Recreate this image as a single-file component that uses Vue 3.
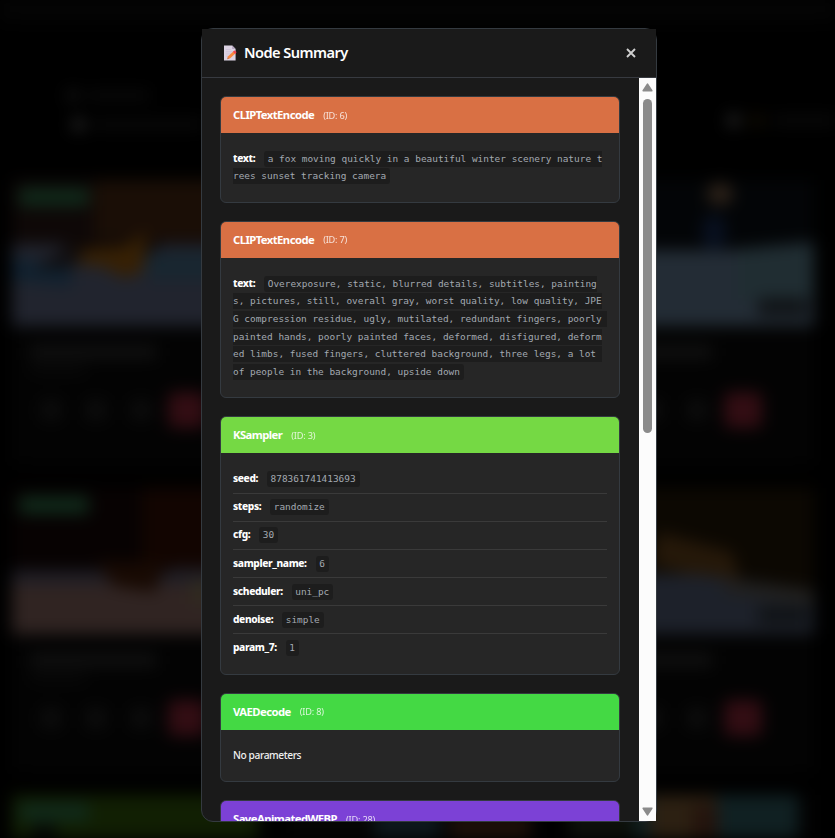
<script setup>
const cards = [
  { scene: 'river', badge: true }, { scene: 'river' }, { scene: 'lake', tag: true },
  { scene: 'dusk', badge: true }, { scene: 'dusk' }, { scene: 'ridge', tag: true },
  { scene: 'grass', badge: true }, { scene: 'embers' }, { scene: 'reef' },
]

const nodes = [
  {
    type: 'CLIPTextEncode', id: 6, tone: 'orange',
    params: [['text', 'a fox moving quickly in a beautiful winter scenery nature trees sunset tracking camera']],
  },
  {
    type: 'CLIPTextEncode', id: 7, tone: 'orange',
    params: [['text', 'Overexposure, static, blurred details, subtitles, paintings, pictures, still, overall gray, worst quality, low quality, JPEG compression residue, ugly, mutilated, redundant fingers, poorly painted hands, poorly painted faces, deformed, disfigured, deformed limbs, fused fingers, cluttered background, three legs, a lot of people in the background, upside down']],
  },
  {
    type: 'KSampler', id: 3, tone: 'lime',
    params: [
      ['seed', '878361741413693'], ['steps', 'randomize'], ['cfg', '30'],
      ['sampler_name', '6'], ['scheduler', 'uni_pc'], ['denoise', 'simple'], ['param_7', '1'],
    ],
  },
  { type: 'VAEDecode', id: 8, tone: 'green', params: [] },
  { type: 'SaveAnimatedWEBP', id: 28, tone: 'violet', params: [] },
]
</script>

<template>
  <div class="page">
    <div class="backdrop">
      <div class="toolbar">
        <div class="tool-col">
          <div class="tool-line"><i class="dot"></i><i class="bar"></i></div>
          <div class="tool-line second"><i class="dot bright"></i><i class="bar long"></i></div>
        </div>
        <div class="tool-right"><i class="dot bright"></i><i class="bar amber"></i><i class="bar"></i></div>
      </div>
      <div class="gallery">
        <div v-for="(c, i) in cards" :key="i" class="tile">
          <div class="thumb" :class="c.scene">
            <svg viewBox="0 0 246 146" preserveAspectRatio="none">
              <g v-if="c.scene === 'river'">
                <rect width="246" height="146" fill="#0e0807" />
                <path d="M82 0h164v60H82z" fill="#1a0e06" />
                <path d="M0 64h50l20 16h60l20-16h96v82H0z" fill="#21242e" />
                <path d="M0 78l60 8v20l-60-6z" fill="#10212f" />
                <path d="M136 72h110v28H136z" fill="#182630" />
                <path d="M62 70l50-4 24-14-6 40-18 6-22-12-26-2z" fill="#362004" />
                <path d="M22 88l34-22 16 8-12 14z" fill="#100e10" />
              </g>
              <g v-else-if="c.scene === 'lake'">
                <rect width="246" height="146" fill="#030507" />
                <path d="M0 70h160l86-8v84H0z" fill="#232c35" />
                <path d="M170 70l76-6v56h-76z" fill="#202d32" />
                <ellipse cx="152" cy="14" rx="13" ry="11" fill="#2d2219" />
                <ellipse cx="146" cy="52" rx="12" ry="18" fill="#081020" />
              </g>
              <g v-else-if="c.scene === 'dusk'">
                <rect width="246" height="146" fill="#070202" />
                <path d="M130 0h116v82H130z" fill="#120501" />
                <path d="M0 82h86l20 10h34l20-12h86v66H0z" fill="#1f1e25" />
                <path d="M0 96h246v50H0z" fill="#302422" />
                <path d="M84 74h66l-6 30-42-6z" fill="#180a03" />
                <path d="M178 92h60v24h-60z" fill="#302a20" />
              </g>
              <g v-else-if="c.scene === 'ridge'">
                <rect width="246" height="146" fill="#0c0802" />
                <path d="M90 44l74 20 10 36-90-24z" fill="#251809" />
                <path d="M0 86h130l116 16v44H0z" fill="#1d212a" />
                <path d="M156 94l90 10v12l-90-12z" fill="#22201c" />
              </g>
              <g v-else-if="c.scene === 'grass'">
                <rect width="246" height="146" fill="#111f03" />
                <ellipse cx="32" cy="36" rx="14" ry="7" fill="#050807" />
                <path d="M20 44h226v102H20z" fill="#210d05" />
              </g>
              <g v-else-if="c.scene === 'embers'">
                <rect width="246" height="146" fill="#050504" />
                <path d="M84 12h66v134H84z" fill="#0d181c" />
                <path d="M160 20h80v126h-80z" fill="#1e1009" />
              </g>
              <g v-else>
                <rect width="230" height="146" fill="#102022" />
                <path d="M82 0h66v146H82z" fill="#2c2012" />
                <path d="M124 10h26v136h-26z" fill="#24140d" />
                <path d="M0 0h66v146H0z" fill="#0d100a" />
              </g>
            </svg>
            <i v-if="c.badge" class="badge"></i>
            <i v-if="c.tag" class="tag"></i>
          </div>
          <div class="caption"><i class="cap-a"></i><i class="cap-b"></i></div>
          <div class="buttons"><i></i><i></i><i></i><i class="danger"></i></div>
        </div>
      </div>
    </div>

    <div class="modal">
      <header class="modal-head">
        <svg class="memo" viewBox="0 0 14 16">
          <path d="M1 .5h8.2L12.6 4v11.5H1z" fill="#dcd3e3" />
          <path d="M9.2.5V4h3.4z" fill="#b5a5c0" />
          <path d="M2.8 4.5h5M2.8 6.7h7M2.8 8.9h5M2.8 11.1h3" stroke="#cbbfd5" stroke-width=".7" />
          <path d="M4.2 14.2l.9-3 5.5-5 2 2.1-5.4 5z" fill="#f9893f" />
          <path d="M10 6.7l1-1q.7-.5 1.4.2l.7.7q.6.7 0 1.3l-1 1z" fill="#ef4453" />
          <path d="M4.2 14.2l.7-2.1 1.5 1.5z" fill="#c67b60" />
        </svg>
        <h2>Node Summary</h2>
        <button class="close" aria-label="Close">
          <svg viewBox="0 0 10 10"><path d="M1 1l8 8M9 1L1 9" /></svg>
        </button>
      </header>
      <div class="modal-body">
        <div class="list">
          <section v-for="n in nodes" :key="n.id" class="node">
            <div class="node-head" :class="n.tone">
              <span class="type">{{ n.type }}</span><span class="id">(ID: {{ n.id }})</span>
            </div>
            <div class="node-body">
              <div v-for="p in n.params" :key="p[0]" class="param">
                <strong>{{ p[0] }}:</strong><code>{{ p[1] }}</code>
              </div>
              <div v-if="!n.params.length" class="param empty">No parameters</div>
            </div>
          </section>
        </div>
        <div class="scrollbar">
          <svg class="arrow" viewBox="0 0 11 9"><path d="M5.5 1.2L9.8 7.8H1.2z" /></svg>
          <div class="handle"></div>
          <svg class="arrow down" viewBox="0 0 11 9"><path d="M5.5 7.8L9.8 1.2H1.2z" /></svg>
        </div>
      </div>
    </div>
  </div>
</template>

<style>
body { background: #000; overflow: hidden; }
</style>

<style scoped>
* { box-sizing: border-box; }
.page {
  width: 835px; height: 838px; overflow: hidden; position: relative;
  display: flex; justify-content: center; align-items: flex-start;
  padding: 28px 0 0 23px;
  font-family: "Noto Sans", "Open Sans", sans-serif; color: #fff;
}
i { display: block; }
.backdrop {
  position: absolute; inset: 0; overflow: hidden; filter: blur(8px);
  background: linear-gradient(#050505 0, #050505 10px, #000 30px);
}
.toolbar { height: 180px; padding: 89px 0 0 66px; display: flex; justify-content: space-between; }
.tool-line { display: flex; align-items: center; gap: 8px; height: 12px; }
.tool-line.second { margin: 17px 0 0 6px; }
.dot { width: 13px; height: 13px; border-radius: 50%; background: #141414; }
.dot.bright { background: #292929; }
.bar { width: 62px; height: 9px; background: #0b0b0b; }
.bar.long { width: 110px; }
.tool-right { display: flex; align-items: center; gap: 8px; width: 108px; height: 62px; }
.tool-right .dot { flex: none; }
.bar.amber { width: 18px; flex: none; background: #130e02; }
.gallery { display: grid; grid-template-columns: repeat(3, 246px); column-gap: 32px; padding-left: 12px; }
.tile { height: 307.5px; background: linear-gradient(#030303, #030303 280px, #000 290px); }
.thumb { height: 146px; position: relative; }
.thumb svg { display: block; width: 246px; height: 146px; }
.badge { position: absolute; left: 7px; top: 8px; width: 70px; height: 18px; border-radius: 4px; background: #10291a; }
.tag { position: absolute; right: 6px; bottom: 10px; width: 50px; height: 18px; background: #101316; }
.caption { padding: 20px 18px 0; height: 66px; display: flex; flex-direction: column; gap: 9px; }
.cap-a { width: 126px; height: 12px; background: #121212; }
.cap-b { width: 56px; height: 5px; background: #0e0e0e; }
.buttons { display: flex; gap: 23px; padding-left: 28px; }
.buttons i { width: 22px; height: 22px; margin-top: 7px; border-radius: 6px; background: #0c0c0c; }
.buttons i.danger { width: 38px; height: 36px; margin: 0 0 0 -7px; background: #320d13; }

.modal {
  position: relative; width: 456px; height: 794px;
  display: flex; flex-direction: column;
  background: #1a1a1a; border: 1px solid #343a40; border-radius: 12px;
}
.modal-head {
  flex: none; height: 49px; padding: 0 20px 0 21px; display: flex; align-items: center;
  background: #1a1a1a; border-bottom: 1px solid #373a40;
}
.memo { width: 14px; height: 16px; margin-right: 7px; }
h2 { margin: 0; padding-bottom: 2px; font-size: 14.6px; font-weight: 600; line-height: 20px; letter-spacing: -.55px; }
.close { margin-left: auto; padding: 0 0 1px; border: 0; background: none; display: flex; }
.close svg { width: 10px; height: 10px; fill: none; stroke: #cfcfcf; stroke-width: 1.9; }
.modal-body { flex: 1; min-height: 0; display: flex; overflow: hidden; border-bottom-left-radius: 11px; }
.list { flex: 1; min-width: 0; padding: 18px 19px 0 18px; }
.node { border: 1px solid #343a40; border-radius: 6px; background: #262626; overflow: hidden; margin-bottom: 18.2px; }
.node-head { height: 36px; padding: 0 12px 1px; display: flex; align-items: center; }
.orange { background: #d97044; }
.lime { background: #75d944; }
.green { background: #44d944; }
.violet { background: #7c41d6; }
.type { font-size: 11.3px; font-weight: 700; letter-spacing: -.57px; }
.id { margin-left: 9px; font-size: 9.2px; letter-spacing: -.2px; opacity: .8; padding-top: 1px; }
.node-body { padding: 12px; }
.param { padding: 4.8px 0; border-bottom: 1px solid #3a3a3a; font-size: 10.2px; line-height: 17.6px; word-break: break-all; }
.param:last-child { border-bottom: 0; }
.param strong { font-weight: 800; letter-spacing: -.38px; }
.param.empty { color: #f0f0f0; font-weight: 500; letter-spacing: -.4px; }
code {
  margin-left: 9px; padding: 2px 4px 3px 3.5px; border-radius: 3px;
  font-family: "DejaVu Sans Mono", monospace; font-size: 9.43px; line-height: 1;
  color: #a3a9b1; background: #1d1d1d; white-space: pre-wrap;
}
.scrollbar { flex: none; width: 17px; background: #fcfcfc; display: flex; flex-direction: column; align-items: center; padding: 5px 0; }
.arrow { width: 11px; height: 9px; fill: #8b8b8b; stroke: #8b8b8b; stroke-width: 1.6; stroke-linejoin: round; }
.handle { width: 9px; height: 334px; margin-top: 7px; border-radius: 5px; background: #8b8b8b; }
.arrow.down { margin-top: auto; }
</style>
